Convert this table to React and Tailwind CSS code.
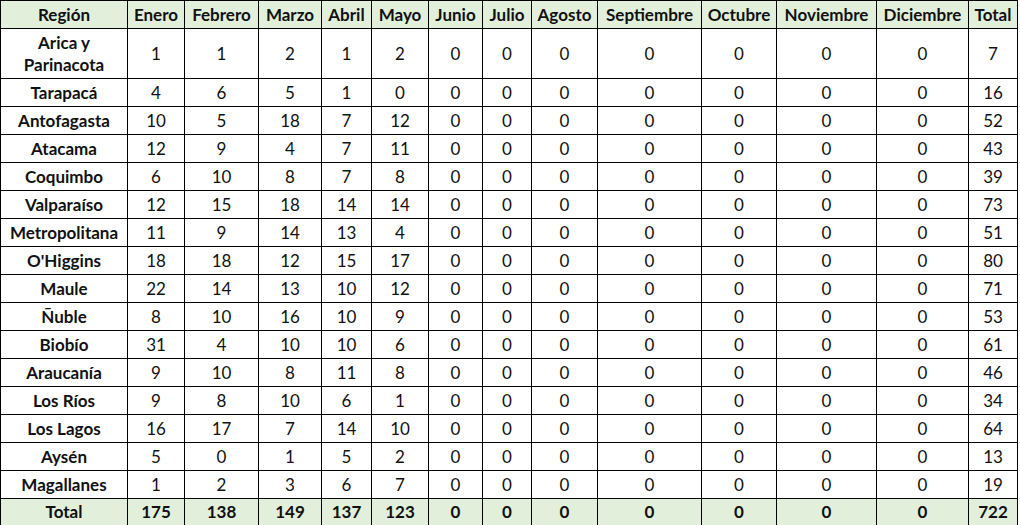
const months = [
  "Enero",
  "Febrero",
  "Marzo",
  "Abril",
  "Mayo",
  "Junio",
  "Julio",
  "Agosto",
  "Septiembre",
  "Octubre",
  "Noviembre",
  "Diciembre",
];

const widths = [127, 57, 74, 63, 50, 57, 54, 49, 66, 104, 75, 100, 92, 49];

const rows = [
  ["Arica y Parinacota", [1, 1, 2, 1, 2], 7],
  ["Tarapacá", [4, 6, 5, 1, 0], 16],
  ["Antofagasta", [10, 5, 18, 7, 12], 52],
  ["Atacama", [12, 9, 4, 7, 11], 43],
  ["Coquimbo", [6, 10, 8, 7, 8], 39],
  ["Valparaíso", [12, 15, 18, 14, 14], 73],
  ["Metropolitana", [11, 9, 14, 13, 4], 51],
  ["O'Higgins", [18, 18, 12, 15, 17], 80],
  ["Maule", [22, 14, 13, 10, 12], 71],
  ["Ñuble", [8, 10, 16, 10, 9], 53],
  ["Biobío", [31, 4, 10, 10, 6], 61],
  ["Araucanía", [9, 10, 8, 11, 8], 46],
  ["Los Ríos", [9, 8, 10, 6, 1], 34],
  ["Los Lagos", [16, 17, 7, 14, 10], 64],
  ["Aysén", [5, 0, 1, 5, 2], 13],
  ["Magallanes", [1, 2, 3, 6, 7], 19],
];

const totals = [175, 138, 149, 137, 123, 0, 0, 0, 0, 0, 0, 0];

const cell = "border border-black text-center align-middle p-0 whitespace-nowrap";

const App = () => {
  return (
    <div className="bg-white w-[1020px] h-[525px] font-['Lato','Open_Sans',sans-serif] text-[17px] leading-[20px] text-[#111]">
      <table className="table-fixed border-collapse w-[1018px]">
        <colgroup>
          {widths.map((w, i) => (
            <col key={i} style={{ width: w }} />
          ))}
        </colgroup>
        <thead>
          {/* HEADER */}
          <tr className="h-[28px] bg-[#e2efda] font-bold">
            <th className={cell}>Región</th>
            {months.map((m) => (
              <th key={m} className={cell}>
                {m}
              </th>
            ))}
            <th className={cell}>Total</th>
          </tr>
        </thead>
        <tbody>
          {rows.map(([name, vals, total], i) => (
            <tr key={name} className={i === 0 ? "h-[50px]" : "h-[28px]"}>
              <td className={`${cell} font-bold leading-[22px]`}>
                {i === 0 ? (
                  <>
                    Arica y
                    <br />
                    Parinacota
                  </>
                ) : (
                  name
                )}
              </td>
              {months.map((m, j) => (
                <td key={m} className={cell}>
                  {j < 5 ? vals[j] : 0}
                </td>
              ))}
              <td className={cell}>{total}</td>
            </tr>
          ))}
          {/* TOTAL */}
          <tr className="h-[27px] bg-[#e2efda] font-bold">
            <td className={cell}>Total</td>
            {totals.map((t, j) => (
              <td key={j} className={cell}>
                {t}
              </td>
            ))}
            <td className={cell}>722</td>
          </tr>
        </tbody>
      </table>
    </div>
  );
};

export default App;
